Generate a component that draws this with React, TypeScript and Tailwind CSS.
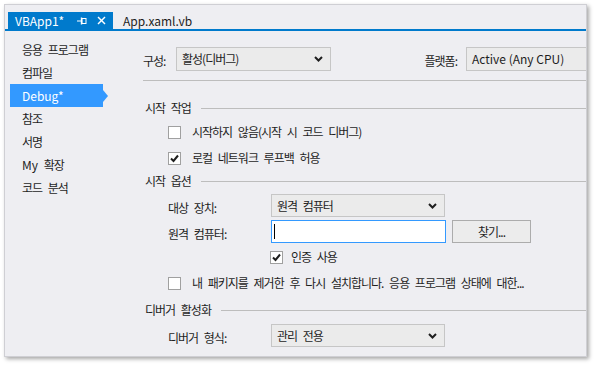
import React from "react";

const KR = "text-[12px] tracking-[-1px] [word-spacing:4px]";
const EN = "text-[12px]";

function Chevron() {
  return (
    <svg width="9" height="6" viewBox="0 0 9 6" className="shrink-0">
      <polyline points="1,1 4.5,4.5 8,1" fill="none" stroke="#1e1e1e" strokeWidth="2" />
    </svg>
  );
}

function Check({ checked }: { checked?: boolean }) {
  return (
    <div className="w-[13px] h-[13px] border border-[#a0a0a0] bg-white flex items-center justify-center shrink-0">
      {checked && (
        <svg width="9" height="9" viewBox="0 0 9 9">
          <polyline points="1,4.5 3.5,7 8,1.5" fill="none" stroke="#1e1e1e" strokeWidth="2" />
        </svg>
      )}
    </div>
  );
}

function Select({ text, w, latin }: { text: string; w: string; latin?: boolean }) {
  return (
    <div
      className={`${w} h-full border border-[#c6c6c6] bg-[#ebebeb] flex items-center justify-between pl-[5px] pr-[7px] shrink-0`}
    >
      <span className={latin ? EN : KR}>{text}</span>
      <Chevron />
    </div>
  );
}

function Section({ title, mt }: { title: string; mt: string }) {
  return (
    <div className={`${mt} h-[16px] flex items-center pl-[2px]`}>
      <span className={KR}>{title}</span>
      <div className="flex-1 h-px bg-[#bdbdbd] ml-[10px]" />
    </div>
  );
}

function CheckRow({ text, checked, mt }: { text: string; checked?: boolean; mt: string }) {
  return (
    <div className={`${mt} h-[20px] flex items-center pl-[25px] gap-[11px]`}>
      <Check checked={checked} />
      <span className={`${KR} whitespace-nowrap`}>{text}</span>
    </div>
  );
}

const navItems = ["응용 프로그램", "컴파일", "Debug*", "참조", "서명", "My 확장", "코드 분석"];

export default function App() {
  return (
    <div className="w-[595px] h-[365px] bg-white pt-[4px] pl-[4px] font-['Noto_Sans_CJK_KR',sans-serif] text-[#1e1e1e] overflow-hidden">
      <div className="w-[583px] h-[353px] bg-[#eeeef2] border border-[#cfcfd4] shadow-[2px_2px_4px_rgba(0,0,0,0.35)] flex flex-col overflow-hidden">
        {/* Tab bar */}
        <div className="h-[24px] flex items-end pl-[3px] shrink-0">
          <div className="w-[105px] h-[17px] bg-[#007acc] text-white flex items-center pl-[7px]">
            <span className={`${EN} leading-none w-[62px]`}>VBApp1*</span>
            <svg width="10" height="8" viewBox="0 0 10 8">
              <line x1="0" y1="4" x2="4" y2="4" stroke="white" strokeWidth="1" />
              <line x1="4.5" y1="0.5" x2="4.5" y2="7.5" stroke="white" strokeWidth="1.4" />
              <rect x="5" y="1.5" width="4" height="5" fill="none" stroke="white" strokeWidth="1" />
            </svg>
            <svg width="9" height="9" viewBox="0 0 9 9" className="ml-[10px]">
              <line x1="1" y1="1" x2="8" y2="8" stroke="white" strokeWidth="1.4" />
              <line x1="8" y1="1" x2="1" y2="8" stroke="white" strokeWidth="1.4" />
            </svg>
          </div>
          <div className="h-[17px] flex items-center pl-[10px]">
            <span className={`${EN} leading-none`}>App.xaml.vb</span>
          </div>
        </div>
        <div className="h-[2px] bg-[#007acc] shrink-0" />

        {/* Body */}
        <div className="flex-1 flex">
          {/* Nav */}
          <div className="w-[138px] pt-[7px] pl-[5px] shrink-0 flex flex-col">
            {navItems.map((item) => {
              const active = item === "Debug*";
              return (
                <div
                  key={item}
                  className={`relative w-[93px] h-[23px] flex items-center pl-[12px] ${
                    active ? "bg-[#3399ff] text-white" : ""
                  }`}
                >
                  {item === "My 확장" ? (
                    <span className={`${KR} whitespace-nowrap`}>
                      <span className="tracking-normal [word-spacing:0px]">My</span> 확장
                    </span>
                  ) : (
                    <span className={active ? EN : KR}>{item}</span>
                  )}
                  {active && (
                    <div className="absolute right-[-5px] top-[6px] w-0 h-0 border-y-[6px] border-y-transparent border-l-[5px] border-l-[#3399ff]" />
                  )}
                </div>
              );
            })}
          </div>

          {/* Content */}
          <div className="flex-1 flex flex-col min-w-0">
            <div className="mt-[16px] h-[24px] flex items-center">
              <div className="w-[33px] shrink-0">
                <span className={KR}>구성:</span>
              </div>
              <Select text="활성(디버그)" w="w-[155px]" />
              <div className="w-[135px] shrink-0 text-right pr-[9px]">
                <span className={KR}>플랫폼:</span>
              </div>
              <div className="w-[130px] h-full border border-[#c6c6c6] bg-[#ebebeb] flex items-center pl-[5px] shrink-0">
                <span className={EN}>Active (Any CPU)</span>
              </div>
            </div>

            <div className="mt-[9px] h-px bg-[#bdbdbd]" />

            <Section title="시작 작업" mt="mt-[19px]" />
            <CheckRow text="시작하지 않음(시작 시 코드 디버그)" mt="mt-[6px]" />
            <CheckRow text="로컬 네트워크 루프백 허용" checked mt="mt-[6px]" />

            <Section title="시작 옵션" mt="mt-[5px]" />
            <div className="mt-[5px] h-[23px] flex items-center pl-[25px]">
              <div className="w-[103px] shrink-0">
                <span className={KR}>대상 장치:</span>
              </div>
              <Select text="원격 컴퓨터" w="w-[174px]" />
            </div>
            <div className="mt-[3px] h-[23px] flex items-center pl-[25px]">
              <div className="w-[103px] shrink-0">
                <span className={KR}>원격 컴퓨터:</span>
              </div>
              <div className="w-[175px] h-full border border-[#3399ff] bg-white flex items-center pl-[2px] shrink-0">
                <div className="w-px h-[15px] bg-black" />
              </div>
              <div className="ml-[6px] w-[79px] h-full border border-[#acacac] bg-[#ececec] flex items-center justify-center shrink-0">
                <span className={KR}>찾기...</span>
              </div>
            </div>
            <div className="mt-[4px] h-[20px] flex items-center pl-[127px] gap-[8px]">
              <Check checked />
              <span className={KR}>인증 사용</span>
            </div>
            <CheckRow text="내 패키지를 제거한 후 다시 설치합니다. 응용 프로그램 상태에 대한..." mt="mt-[6px]" />

            <Section title="디버거 활성화" mt="mt-[9px]" />
            <div className="mt-[6px] h-[23px] flex items-center pl-[25px]">
              <div className="w-[103px] shrink-0">
                <span className={KR}>디버거 형식:</span>
              </div>
              <Select text="관리 전용" w="w-[174px]" />
            </div>
          </div>
        </div>
      </div>
    </div>
  );
}
